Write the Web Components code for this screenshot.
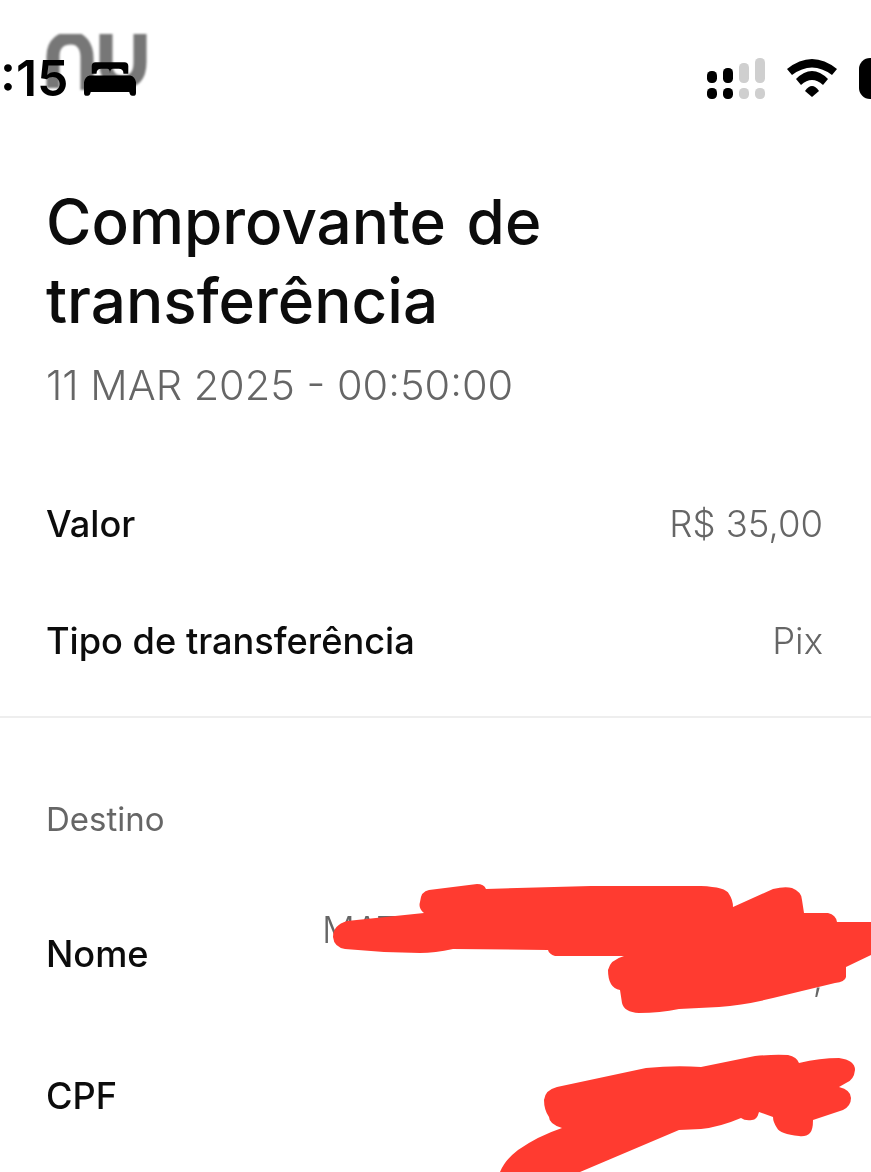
<!DOCTYPE html>
<html lang="pt-BR">
<head>
<meta charset="utf-8">
<title>Comprovante de transferência</title>
<style>
html, body { margin: 0; background: #fff; }
body { width: 871px; height: 1172px; overflow: hidden; font-family: Inter, "Liberation Sans", sans-serif; }
</style>
</head>
<body>
<receipt-page>
  <status-bar></status-bar>
  <receipt-header date="11 MAR 2025 - 00:50:00">Comprovante de<br>transferência</receipt-header>
  <receipt-row label="Valor" style="--row-h:118px">R$ 35,00</receipt-row>
  <receipt-row label="Tipo de transferência" style="--row-h:116px">Pix</receipt-row>
  <receipt-section label="Destino"></receipt-section>
  <receipt-row label="Nome" style="--row-h:142px" wide>
    <div>MATI</div>
    <div class="end">,</div>
  </receipt-row>
  <receipt-row label="CPF" style="--row-h:142px"></receipt-row>
</receipt-page>
<script>
const pageTemplate = document.createElement('template')
pageTemplate.innerHTML = /* HTML */`
<style>
:host {
  display: block;
  position: relative;
  width: 871px;
  height: 1172px;
  overflow: hidden;
  background: #fff;
  color: #111;
}
.content {
  filter: blur(0.7px);
}
.scribble {
  position: absolute;
  left: 0;
  top: 0;
}
</style>
<div class="content"><slot></slot></div>
<svg class="scribble" width="871" height="1172" viewBox="0 0 871 1172" fill="#ff3b30">
  <path d="M333 937Q333 925 347 921L424 913Q418 908 420 902Q421 891 429 890L477 884Q484 884 486 889L591 886L701 886Q726 887 729 894Q733 900 733 907L773 889Q785 886 792 888Q802 892 802 900L804 913L828 913Q836 915 837 922L871 922L871 955L846 967L846 977Q845 982 835 983L773 998Q745 1005 719 1007L679 1009Q660 1013 639 1013Q624 1012 622 1003L620 990Q608 988 608 970Q610 960 624 956L555 956Q549 954 548 950L453 949Q435 953 420 953L384 952L345 949Q334 947 333 937Z"/>
  <path d="M544 1100Q545 1090 557 1087L646 1068Q675 1065 701 1067L755 1056Q775 1054 788 1055Q797 1057 799 1063Q820 1058 839 1058Q855 1060 855 1070Q854 1080 846 1083L839 1087Q851 1090 851 1098Q851 1106 843 1110L813 1120Q813 1130 810 1133Q806 1137 799 1136Q780 1134 777 1128Q773 1122 773 1117L759 1112Q757 1120 752 1120Q745 1121 741 1118Q720 1127 701 1129L679 1130L580 1172L500 1172Q505 1160 518 1150Q538 1136 562 1128Q549 1124 549 1117Q544 1110 544 1100Z"/>
</svg>
`
class ReceiptPage extends HTMLElement {
  constructor() {
    super()
    this.attachShadow({mode: 'open'})
    this.shadowRoot.appendChild(pageTemplate.content.cloneNode(true))
  }
}
customElements.define('receipt-page', ReceiptPage)

const statusTemplate = document.createElement('template')
statusTemplate.innerHTML = /* HTML */`
<style>
:host {
  display: flex;
  position: relative;
  align-items: center;
  height: 76px;
  margin-top: 40px;
}
.logo {
  position: absolute;
  left: 44px;
  top: -6px;
  filter: blur(1.2px);
}
.time {
  position: relative;
  font: 600 50px/76px Inter, "Liberation Sans", sans-serif;
  color: #000;
}
.bed {
  position: relative;
  margin-left: 15px;
}
.right {
  display: flex;
  align-items: center;
  margin-left: auto;
  gap: 22px;
}
.battery {
  width: 12px;
  height: 41px;
  background: #000;
  border-radius: 11px 0 0 11px;
}
</style>
<svg class="logo" width="108" height="56" viewBox="0 0 108 56" fill="none" stroke="#777" stroke-width="13">
  <path d="M9 54V22C9 9 18 4 27 4C37 4 43 12 43 24V56"/>
  <path d="M62 0V30C62 44 70 48 78 48C88 48 96 44 96 28V0" stroke-width="13"/>
</svg>
<span class="time">:15</span>
<svg class="bed" width="52" height="35" viewBox="0 0 54 36" fill="#000">
  <path d="M8 13V5Q8 1 12 1H42Q46 1 46 5V13H41Q41 8 36 8H30Q27 8 27 13Q27 8 24 8H18Q13 8 13 13Z"/>
  <path d="M6 15H48Q53 16 54 22V33Q54 36 51 36H50Q48 36 47 32H7Q6 36 4 36H3Q0 36 0 33V22Q1 16 6 15Z"/>
</svg>
<div class="right">
  <svg width="58" height="41" viewBox="0 0 58 41">
    <g fill="#000">
      <rect x="0" y="13" width="10" height="12" rx="4.5"/><rect x="16" y="10" width="10" height="15" rx="4.5"/>
      <rect x="0" y="30" width="10" height="11" rx="4.5"/><rect x="16" y="30" width="10" height="11" rx="4.5"/>
    </g>
    <g fill="#cfcfcf">
      <rect x="32" y="5" width="10" height="20" rx="4.5"/><rect x="48" y="0" width="10" height="25" rx="4.5"/>
      <rect x="32" y="30" width="10" height="11" rx="4.5"/><rect x="48" y="30" width="10" height="11" rx="4.5"/>
    </g>
  </svg>
  <svg width="50" height="38" viewBox="0 0 50 38" fill="#000">
    <path d="M0 10Q25 -10 50 10L45 16Q25 1 5 16Z"/>
    <path d="M9 20Q25 4 41 20L36 26Q25 16 14 26Z"/>
    <path d="M18 32Q25 22 32 32L25 38Z"/>
  </svg>
  <div class="battery"></div>
</div>
`
class StatusBar extends HTMLElement {
  constructor() {
    super()
    this.attachShadow({mode: 'open'})
    this.shadowRoot.appendChild(statusTemplate.content.cloneNode(true))
  }
}
customElements.define('status-bar', StatusBar)

const headerTemplate = document.createElement('template')
headerTemplate.innerHTML = /* HTML */`
<style>
:host {
  display: block;
  padding: 66px 46px 55px;
}
h1 {
  margin: 0;
  font: 550 62px/79px Inter, "Liberation Sans", sans-serif;
  word-spacing: 4px;
  color: #0c0c0c;
}
p {
  margin: 20px 0 0;
  font: 300 41.5px/50px Inter, "Liberation Sans", sans-serif;
  color: #666;
}
</style>
<h1><slot></slot></h1>
<p></p>
`
class ReceiptHeader extends HTMLElement {
  constructor() {
    super()
    this.attachShadow({mode: 'open'})
    this.shadowRoot.appendChild(headerTemplate.content.cloneNode(true))
    this.shadowRoot.querySelector('p').textContent = this.getAttribute('date')
  }
}
customElements.define('receipt-header', ReceiptHeader)

const rowTemplate = document.createElement('template')
rowTemplate.innerHTML = /* HTML */`
<style>
:host {
  display: flex;
  justify-content: space-between;
  align-items: center;
  height: var(--row-h, 118px);
  padding: 0 48px 0 46px;
}
.label {
  font: 550 36.2px/48px Inter, "Liberation Sans", sans-serif;
  color: #0c0c0c;
}
.value {
  font: 300 36.5px/48px Inter, "Liberation Sans", sans-serif;
  color: #666;
  text-align: right;
}
:host([wide]) .value {
  width: 501px;
  text-align: left;
}
::slotted(.end) {
  text-align: right;
}
</style>
<span class="label"></span>
<div class="value"><slot></slot></div>
`
class ReceiptRow extends HTMLElement {
  constructor() {
    super()
    this.attachShadow({mode: 'open'})
    this.shadowRoot.appendChild(rowTemplate.content.cloneNode(true))
    this.shadowRoot.querySelector('.label').textContent = this.getAttribute('label')
  }
}
customElements.define('receipt-row', ReceiptRow)

const sectionTemplate = document.createElement('template')
sectionTemplate.innerHTML = /* HTML */`
<style>
:host {
  display: block;
  margin-top: 17px;
  border-top: 2px solid #eee;
  padding: 83px 46px 46px;
  font: 400 33px/36px Inter, "Liberation Sans", sans-serif;
  color: #666;
}
span {
  display: block;
}
</style>
<span></span>
`
class ReceiptSection extends HTMLElement {
  constructor() {
    super()
    this.attachShadow({mode: 'open'})
    this.shadowRoot.appendChild(sectionTemplate.content.cloneNode(true))
    this.shadowRoot.querySelector('span').textContent = this.getAttribute('label')
  }
}
customElements.define('receipt-section', ReceiptSection)
</script>
</body>
</html>
